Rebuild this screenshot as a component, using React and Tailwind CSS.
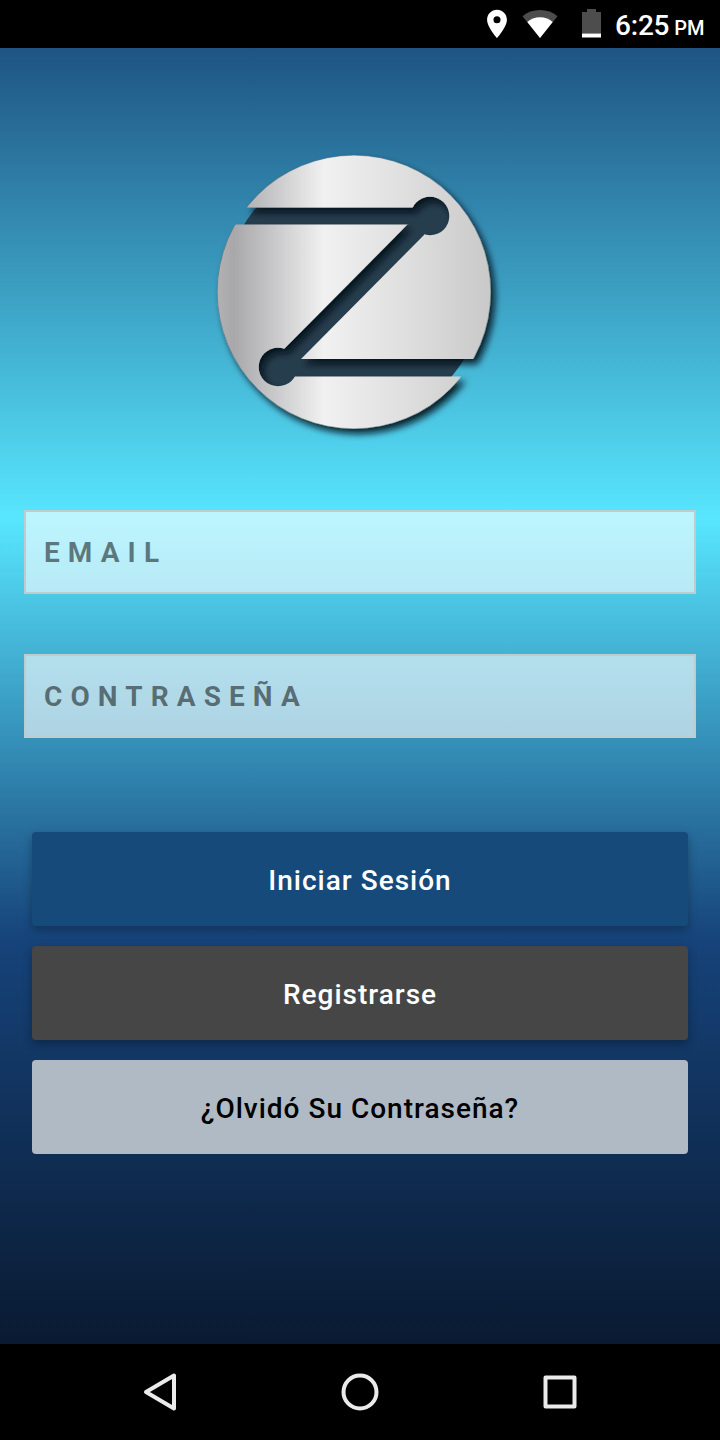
import React, { useState } from 'react';

const BUTTONS = [
  { label: 'Iniciar Sesión', style: 'bg-[#164a7b] text-white shadow-[0_4px_10px_rgba(0,0,0,0.3)]' },
  { label: 'Registrarse', style: 'bg-[#464646] text-white shadow-[0_4px_10px_rgba(0,0,0,0.3)]' },
  { label: '¿Olvidó Su Contraseña?', style: 'bg-[#b0bac5] text-black' },
];

const StatusBar = () => (
  <header className="flex h-12 shrink-0 items-start bg-black pl-[480px] text-white">
    {/* Location */}
    <svg width="34" height="34" viewBox="0 0 24 24" fill="white" className="mt-[7px] shrink-0">
      <path d="M12 2C8.13 2 5 5.13 5 9c0 5.25 7 13 7 13s7-7.75 7-13c0-3.87-3.13-7-7-7zm0 9.5a2.5 2.5 0 0 1 0-5 2.5 2.5 0 0 1 0 5z" />
    </svg>
    {/* Wifi */}
    <svg width="36" height="28" viewBox="0 0 36 28" className="mt-2.5 ml-2 shrink-0">
      <path d="M18 28L0.5 6.2C5.2 2.2 11.2 0 18 0s12.8 2.2 17.5 6.2z" fill="#4d4d4d" />
      <path d="M18 28L5.3 12.1C8.5 9 13 7.2 18 7.2s9.5 1.8 12.7 4.9z" fill="white" />
    </svg>
    {/* Battery */}
    <svg width="19" height="29" viewBox="0 0 19 29" className="mt-[9px] ml-6 shrink-0">
      <path d="M0 3h5V0h9v3h5v21.5H0z" fill="#4d4d4d" />
      <path d="M0 24.5h19v4H0z" fill="white" />
    </svg>
    <div className="mt-2.5 ml-3.5 flex items-baseline gap-[5px] leading-8 font-medium whitespace-nowrap">
      <span className="text-[28px] tracking-[-0.2px]">6:25</span>
      <span className="text-[20px] tracking-[-0.2px]">PM</span>
    </div>
  </header>
);

const Logo = () => (
  <svg width="300" height="300" viewBox="204 142 300 300" className="ml-[204px] shrink-0">
    <defs>
      <linearGradient id="metal" gradientUnits="userSpaceOnUse" x1="217" y1="0" x2="491" y2="0">
        <stop offset="0" stopColor="#b2b2b4" />
        <stop offset="0.06" stopColor="#a8a8ab" />
        <stop offset="0.22" stopColor="#cbcbcd" />
        <stop offset="0.39" stopColor="#f1f1f1" />
        <stop offset="0.7" stopColor="#dedede" />
        <stop offset="1" stopColor="#c9c9c9" />
      </linearGradient>
      <mask id="cutout" maskUnits="userSpaceOnUse" x="204" y="142" width="300" height="300">
        <circle cx="354" cy="292" r="137" fill="white" />
        <path d="M204 207.500H430V224.500H204zM278 359H504V376.500H278z" fill="black" />
        <path d="M407.500 224.500L284 349L278 367L301 359L424 235L430 216z" fill="black" />
        <circle cx="430" cy="216" r="19.300" fill="black" />
        <circle cx="278" cy="367" r="19.300" fill="black" />
      </mask>
      <filter id="drop" filterUnits="userSpaceOnUse" x="204" y="142" width="300" height="300">
        <feDropShadow dx="4" dy="5" stdDeviation="3.600" floodColor="#000c12" floodOpacity="0.9" />
      </filter>
    </defs>
    <circle cx="354" cy="292" r="129" fill="#253d4d" />
    <g filter="url(#drop)">
      <circle cx="354" cy="292" r="137" fill="url(#metal)" mask="url(#cutout)" />
    </g>
    <circle cx="354" cy="292" r="136.800" fill="none" stroke="#304b58" strokeOpacity="0.45" mask="url(#cutout)" />
  </svg>
);

const Field = ({ type, placeholder, value, onChange }) => (
  <input
    type={type}
    placeholder={placeholder}
    value={value}
    onChange={(e) => onChange(e.target.value)}
    className="h-[84px] w-full border-2 border-[#c0cccb] bg-white/60 bg-clip-padding px-[18px] text-[28px] font-bold tracking-[8.1px] text-black/54 outline-none placeholder:text-black/51"
  />
);

const NavBar = () => (
  <nav className="flex h-24 shrink-0 items-center justify-center gap-[160px] bg-black">
    <svg width="40" height="40" viewBox="0 0 40 40" fill="none" stroke="#ebebeb" strokeWidth="4" strokeLinejoin="round">
      <path d="M34 3.5V36.5L6 20z" />
    </svg>
    <svg width="40" height="40" viewBox="0 0 40 40" fill="none" stroke="#ebebeb" strokeWidth="4">
      <circle cx="20" cy="20" r="16.5" />
    </svg>
    <svg width="40" height="40" viewBox="0 0 40 40" fill="none" stroke="#ebebeb" strokeWidth="4" strokeLinejoin="round">
      <path d="M5.5 5.5h29v29h-29z" />
    </svg>
  </nav>
);

const App = () => {
  const [email, setEmail] = useState('');
  const [password, setPassword] = useState('');

  return (
    <div className="flex h-[1440px] w-[720px] flex-col overflow-hidden font-[Roboto,sans-serif]">
      <StatusBar />

      <main className="flex flex-1 flex-col bg-[linear-gradient(180deg,#1e5483_0px,#58e6fe_470px,#16437a_892px,#0a1a31_1296px)] pt-[94px]">
        <Logo />

        <form onSubmit={(e) => e.preventDefault()} className="mt-[68px] px-6">
          <div className="flex flex-col gap-[60px]">
            <Field type="email" placeholder="EMAIL" value={email} onChange={setEmail} />
            <Field type="password" placeholder="CONTRASEÑA" value={password} onChange={setPassword} />
          </div>

          <div className="mt-[94px] flex flex-col gap-5 px-2">
            {BUTTONS.map(({ label, style }) => (
              <button
                key={label}
                type="button"
                className={`h-[94px] rounded-[4px] pt-1 text-[28px] font-medium tracking-[1px] ${style}`}
              >
                {label}
              </button>
            ))}
          </div>
        </form>
      </main>

      <NavBar />
    </div>
  );
};

export default App;
